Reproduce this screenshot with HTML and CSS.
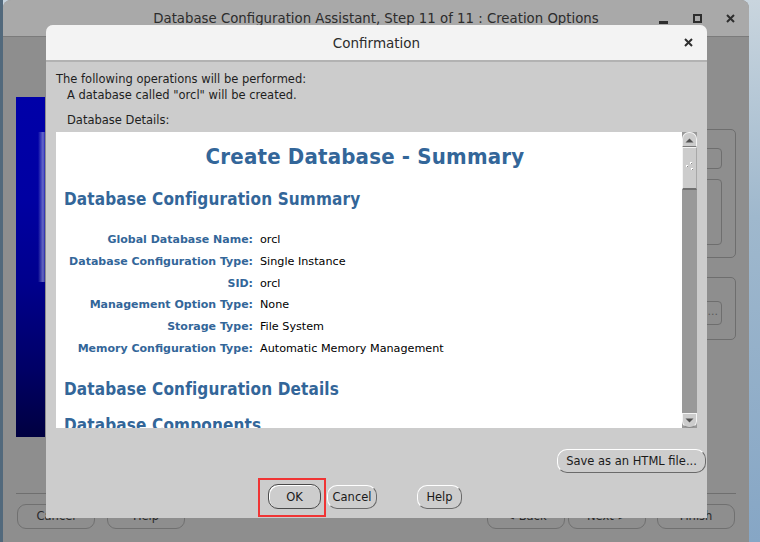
FILE: index.html
```html
<!DOCTYPE html>
<html>
<head>
<meta charset="utf-8">
<title>Confirmation</title>
<link rel="stylesheet" href="styles.css">
</head>
<body>
<div class="desktop">
  <div class="mainwin">
    <div class="main-title">
      <span></span>
      <span class="main-title-text">Database Configuration Assistant, Step 11 of 11 : Creation Options</span>
      <div class="wm-controls">
        <span class="wm-min"></span>
        <span class="wm-max"></span>
        <svg class="wm-close" width="9" height="9" viewBox="0 0 9 9"><path d="M1 1L8 8M8 1L1 8" stroke="#2e2e2e" stroke-width="2"/></svg>
      </div>
    </div>
    <div class="main-body">
      <div class="main-top">
        <div class="side-image"></div>
        <div class="main-panels">
          <div class="frame frame-one">
            <div class="inner-box box-a"></div>
            <div class="inner-box box-b"></div>
          </div>
          <div class="frame frame-two">
            <div class="inner-box box-c">...</div>
          </div>
        </div>
      </div>
      <div class="main-sep"></div>
      <div class="main-buttons">
        <div class="main-btn-group">
          <span class="ghost-btn">Cancel</span>
          <span class="ghost-btn">Help</span>
        </div>
        <div class="main-btn-group">
          <span class="ghost-btn">&lt; Back</span>
          <span class="ghost-btn">Next &gt;</span>
          <span class="ghost-btn finish">Finish</span>
        </div>
      </div>
    </div>
  </div>

  <div class="dialog">
    <div class="dlg-title">
      <span></span>
      <span class="dlg-title-text">Confirmation</span>
      <svg class="dlg-close" width="9" height="9" viewBox="0 0 9 9"><path d="M1 1L8 8M8 1L1 8" stroke="#2e2e2e" stroke-width="2"/></svg>
    </div>
    <div class="dlg-body">
      <p class="msg">The following operations will be performed:</p>
      <p class="msg indent">A database called "orcl" will be created.</p>
      <p class="msg indent details">Database Details:</p>
      <div class="viewer">
        <div class="doc">
          <h1 class="doc-h1">Create Database - Summary</h1>
          <h2 class="doc-h2">Database Configuration Summary</h2>
          <div class="summary">
            <span class="lbl">Global Database Name:</span><span class="val">orcl</span>
            <span class="lbl">Database Configuration Type:</span><span class="val">Single Instance</span>
            <span class="lbl">SID:</span><span class="val">orcl</span>
            <span class="lbl">Management Option Type:</span><span class="val">None</span>
            <span class="lbl">Storage Type:</span><span class="val">File System</span>
            <span class="lbl">Memory Configuration Type:</span><span class="val">Automatic Memory Management</span>
          </div>
          <h2 class="doc-h2 details-h">Database Configuration Details</h2>
          <h2 class="doc-h2 comp-h">Database Components</h2>
        </div>
        <div class="scrollbar">
          <div class="sb-btn sb-up">
            <svg width="9" height="5" viewBox="0 0 9 5"><path d="M0.5 4.5L4.5 0.5L8.5 4.5Z" fill="#505050"/></svg>
          </div>
          <div class="sb-thumb">
            <svg width="8" height="10" viewBox="0 0 8 10"><rect x="4" y="0" width="2" height="2" fill="#fff"/><rect x="5" y="1" width="1" height="1" fill="#888"/><rect x="0" y="3" width="2" height="2" fill="#fff"/><rect x="1" y="4" width="1" height="1" fill="#888"/><rect x="5" y="6" width="2" height="2" fill="#fff"/><rect x="6" y="7" width="1" height="1" fill="#888"/></svg>
          </div>
          <div class="sb-track"></div>
          <div class="sb-btn sb-down">
            <svg width="9" height="5" viewBox="0 0 9 5"><path d="M0.5 0.5L4.5 4.5L8.5 0.5Z" fill="#505050"/></svg>
          </div>
        </div>
      </div>
      <div class="save-row">
        <button class="btn save-btn">Save as an HTML file...</button>
      </div>
      <div class="btn-row">
        <div class="highlight">
          <button class="btn default-btn ok-btn">OK</button>
        </div>
        <button class="btn cancel-btn">Cancel</button>
        <button class="btn help-btn">Help</button>
      </div>
    </div>
  </div>
</div>
</body>
</html>
```

FILE: styles.css
```css
* { box-sizing: border-box; }

html, body {
  margin: 0;
  padding: 0;
  width: 760px;
  height: 542px;
  overflow: hidden;
}

body {
  font-family: "DejaVu Sans", "Liberation Sans", sans-serif;
  font-size: 11.5px;
  color: #1e1e1e;
}

.desktop {
  position: relative;
  width: 760px;
  height: 542px;
  background: linear-gradient(to right, #52697c 0, #52697c 3px, transparent 3px),
              linear-gradient(to bottom, #c9d5de 0%, #9fb8cd 40%, #86a6c5 100%);
  overflow: hidden;
}

/* ---------- main (dimmed) window ---------- */
.mainwin {
  position: absolute;
  left: 3px;
  top: 0;
  width: 746px;
  height: 542px;
  border-radius: 8px 8px 0 0;
  background: #8e8e8e;
  display: flex;
  flex-direction: column;
  overflow: hidden;
}

.main-title {
  height: 37px;
  flex: none;
  background: #a9a9a9;
  border-bottom: 1px solid #7b7b7b;
  display: grid;
  grid-template-columns: 1fr auto 1fr;
  align-items: center;
}

.main-title-text {
  font-size: 13.3px;
  color: #2c2c2c;
}

.wm-controls {
  justify-self: end;
  display: flex;
  align-items: center;
  height: 37px;
  padding-right: 14px;
}

.wm-min {
  width: 9px;
  height: 3px;
  background: #2e2e2e;
  margin-top: 7px;
  margin-right: 25px;
}

.wm-max {
  width: 9px;
  height: 9px;
  border: 2px solid #2e2e2e;
  margin-right: 24px;
}

.wm-close { display: block; }

.main-body {
  flex: 1;
  display: flex;
  flex-direction: column;
}

.main-top {
  height: 456px;
  display: flex;
  justify-content: space-between;
  padding: 0 13px;
}

.side-image {
  width: 29px;
  height: 340px;
  margin-top: 60px;
  background:
    linear-gradient(to right, rgba(200, 205, 240, 0) 0, rgba(200, 205, 240, 0) 22px, rgba(190, 195, 235, 0.55) 27px, rgba(190, 195, 235, 0.2) 29px),
    linear-gradient(to bottom, #0000a8 0%, #0000a2 30%, #00008c 55%, #000066 80%, #000040 100%);
  background-size: 29px 150px, 100% 100%;
  background-position: 0 35px, 0 0;
  background-repeat: no-repeat;
}

.main-panels {
  width: 200px;
  display: flex;
  flex-direction: column;
  align-items: flex-end;
}

.frame {
  width: 190px;
  border: 1px solid #6e6e6e;
  border-radius: 5px;
  display: flex;
  flex-direction: column;
  align-items: flex-end;
}

.frame-one {
  margin-top: 92px;
  height: 129px;
  padding: 18px 13px 0 0;
}

.frame-two {
  margin-top: 19px;
  height: 63px;
  padding: 23px 13px 0 0;
}

.inner-box {
  width: 150px;
  border: 1px solid #6e6e6e;
  border-radius: 4px;
}

.box-a { height: 21px; }
.box-b { height: 66px; margin-top: 10px; }
.box-c {
  height: 24px;
  color: #5a5a5a;
  text-align: right;
  padding-right: 3px;
  line-height: 20px;
  font-size: 11px;
}

.main-sep {
  height: 1px;
  margin: 0 13px;
  background: #6f6f6f;
}

.main-buttons {
  display: flex;
  justify-content: space-between;
  padding: 10px 14px 0 14px;
}

.main-btn-group {
  display: flex;
  gap: 3px;
}

.main-btn-group:first-child { gap: 12px; }

.ghost-btn {
  width: 78px;
  height: 25px;
  border: 1px solid #707070;
  border-radius: 9px;
  color: #2a2a2a;
  font-size: 11.5px;
  line-height: 23px;
  text-align: center;
}

.ghost-btn.finish { margin-left: 8px; }

/* ---------- dialog ---------- */
.dialog {
  position: absolute;
  left: 46px;
  top: 25px;
  width: 661px;
  height: 493px;
  background: #cccccc;
  border-radius: 7px 7px 0 0;
  display: flex;
  flex-direction: column;
  overflow: hidden;
}

.dlg-title {
  height: 37px;
  flex: none;
  background: #f3f3f3;
  border-bottom: 2px solid #b2b2b2;
  display: grid;
  grid-template-columns: 1fr auto 1fr;
  align-items: center;
}

.dlg-title-text {
  font-size: 13.5px;
  color: #2c2c2c;
  padding-top: 1px;
}

.dlg-close {
  justify-self: end;
  margin-right: 14px;
  display: block;
}

.dlg-body {
  flex: 1;
  padding: 9px 10px 0 10px;
  display: flex;
  flex-direction: column;
}

.msg {
  margin: 0;
  line-height: 16px;
  font-size: 11.5px;
  color: #1e1e1e;
}

.msg.indent { padding-left: 11px; }
.msg.details { margin-top: 9px; }

.viewer {
  margin-top: 4px;
  height: 296px;
  display: flex;
  flex: none;
}

.doc {
  flex: 1;
  background: #ffffff;
  overflow: hidden;
  padding: 0 8px;
  font-family: "DejaVu Sans", sans-serif;
}

.doc-h1 {
  margin: 12px 0 0 0;
  font-family: "DejaVu Sans Condensed", "DejaVu Sans", sans-serif;
  font-size: 22px;
  line-height: 26px;
  font-weight: bold;
  color: #336699;
  text-align: center;
  letter-spacing: 0.2px;
  padding-right: 8px;
}

.doc-h2 {
  margin: 18px 0 0 0;
  font-family: "DejaVu Sans Condensed", "DejaVu Sans", sans-serif;
  font-size: 17px;
  line-height: 22px;
  font-weight: bold;
  color: #336699;
  white-space: nowrap;
  letter-spacing: 0.15px;
}

.details-h { margin-top: 18px; }
.comp-h { margin-top: 14px; }

.summary {
  margin-top: 19px;
  display: grid;
  grid-template-columns: 189px auto;
  column-gap: 7px;
  line-height: 21.8px;
}

.lbl {
  text-align: right;
  font-weight: bold;
  color: #336699;
  font-size: 11px;
  letter-spacing: 0;
  white-space: nowrap;
}

.val {
  color: #000;
  font-size: 11.2px;
  white-space: nowrap;
}

.scrollbar {
  width: 15px;
  background: #999999;
  display: flex;
  flex-direction: column;
}

.sb-btn {
  height: 15px;
  background: #cccccc;
  display: flex;
  align-items: center;
  justify-content: center;
  flex: none;
}

.sb-btn svg { display: block; }

.sb-up {
  border-radius: 7px 7px 0 0;
  border: 1px solid #f4f4f4;
  border-bottom: 1px solid #7a7a7a;
  padding-top: 2px;
}

.sb-down {
  border-radius: 0 0 7px 7px;
  border: 1px solid #f4f4f4;
  border-bottom-color: #8a8a8a;
  padding-bottom: 1px;
}

.sb-thumb {
  height: 43px;
  flex: none;
  background: #cccccc;
  border-left: 1px solid #f4f4f4;
  border-right: 1px solid #a8a8a8;
  border-top: 1px solid #f4f4f4;
  border-bottom: 2px solid #707070;
  display: flex;
  align-items: center;
  justify-content: center;
}

.sb-thumb svg { display: block; margin-top: -2px; }

.sb-track { flex: 1; }

.btn {
  font-family: "DejaVu Sans", sans-serif;
  font-size: 11.5px;
  color: #1a1a1a;
  background: #cdcdcd;
  border: 1px solid;
  border-color: #ffffff #6a6a6a #6a6a6a #ffffff;
  border-radius: 10px;
  padding: 0;
  margin: 0;
  text-align: center;
}

.save-row {
  display: flex;
  justify-content: flex-end;
  margin-top: 21px;
  margin-right: -9px;
}

.save-btn {
  width: 149px;
  height: 24px;
}

.btn-row {
  display: flex;
  align-items: flex-start;
  margin-top: 5px;
  padding-left: 202px;
}

.highlight {
  width: 68px;
  height: 39px;
  border: 2px solid #f03434;
  padding: 4px 0 0 8px;
}

.ok-btn {
  width: 53px;
  height: 25px;
}

.default-btn {
  border: 1px solid #4a4a4a;
  box-shadow: inset 1px 1px 0 #ffffff;
}

.cancel-btn {
  width: 50px;
  height: 24px;
  margin-top: 7px;
  margin-left: 1px;
}

.help-btn {
  width: 45px;
  height: 24px;
  margin-top: 7px;
  margin-left: 40px;
}
```
